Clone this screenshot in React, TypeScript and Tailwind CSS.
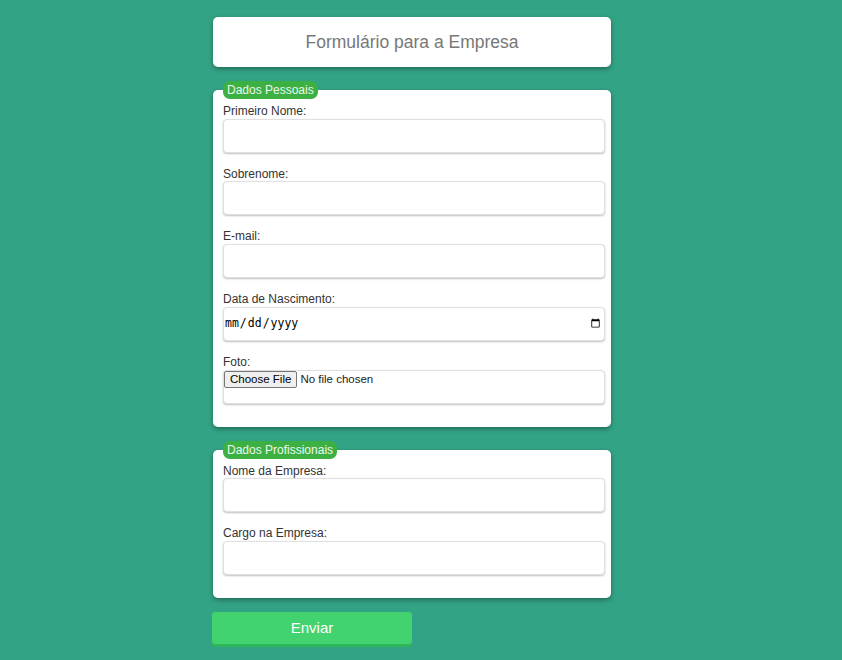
import React from "react";

const inputCls =
  "block w-[382px] h-[34px] mb-[14px] bg-white border border-[#e0e0e0] rounded-[4px] shadow-[0_1px_2px_rgba(0,0,0,0.25)] outline-none";

function Field({ label, type = "text" }: { label: string; type?: string }) {
  return (
    <div>
      <label className="block text-[12px] leading-[14.7px] text-[#333]">{label}</label>
      {type === "date" ? (
        <input
          type="date"
          className={inputCls + " font-['DejaVu_Sans_Mono',monospace] text-[11.5px] text-black pl-0 pr-[1px]"}
        />
      ) : type === "file" ? (
        <div className={inputCls + " flex items-start"}>
          <input
            type="file"
            className="text-[11.5px] leading-[15px] text-[#222] file:mr-[3px] file:bg-[#efefef] file:border file:border-[#767676] file:rounded-[2px] file:px-[5px] file:py-0 file:text-[11.5px] file:leading-[15px] file:text-black"
          />
        </div>
      ) : (
        <input type={type} className={inputCls + " px-[2px] text-[12px]"} />
      )}
    </div>
  );
}

function Section({ title, children }: { title: string; children: React.ReactNode }) {
  return (
    <fieldset className="w-[398px] min-w-0 bg-white rounded-[5px] shadow-[0_2px_5px_rgba(0,0,0,0.35)] pl-[10px] pr-[6px] pt-[5px] pb-[9px]">
      <legend className="bg-[#3cb043] text-[#eef8ee] text-[12px] leading-[18px] px-[4px] rounded-[7px]">{title}</legend>
      {children}
    </fieldset>
  );
}

export default function App() {
  return (
    <div className="min-h-[660px] bg-[#33a386] font-['Liberation_Sans',Arial,sans-serif] pl-[213px] pt-[17px]">
      <div className="flex flex-col items-start">
        <div className="w-[398px] h-[50px] bg-white rounded-[5px] shadow-[0_2px_5px_rgba(0,0,0,0.35)] flex items-center justify-center text-[17.5px] text-[#777]">
          Formulário para a Empresa
        </div>
        <div className="mt-[14px]">
          <Section title="Dados Pessoais">
            <Field label="Primeiro Nome:" />
            <Field label="Sobrenome:" />
            <Field label="E-mail:" type="email" />
            <Field label="Data de Nascimento:" type="date" />
            <Field label="Foto:" type="file" />
          </Section>
        </div>
        <div className="mt-[14px]">
          <Section title="Dados Profissionais">
            <Field label="Nome da Empresa:" />
            <Field label="Cargo na Empresa:" />
          </Section>
        </div>
        <button className="mt-[14px] -ml-[1px] w-[200px] h-[32px] bg-[#42d370] text-white text-[15px] rounded-[3px] shadow-[0_3px_0_#2eb45a] mb-[13px]">
          Enviar
        </button>
      </div>
    </div>
  );
}
